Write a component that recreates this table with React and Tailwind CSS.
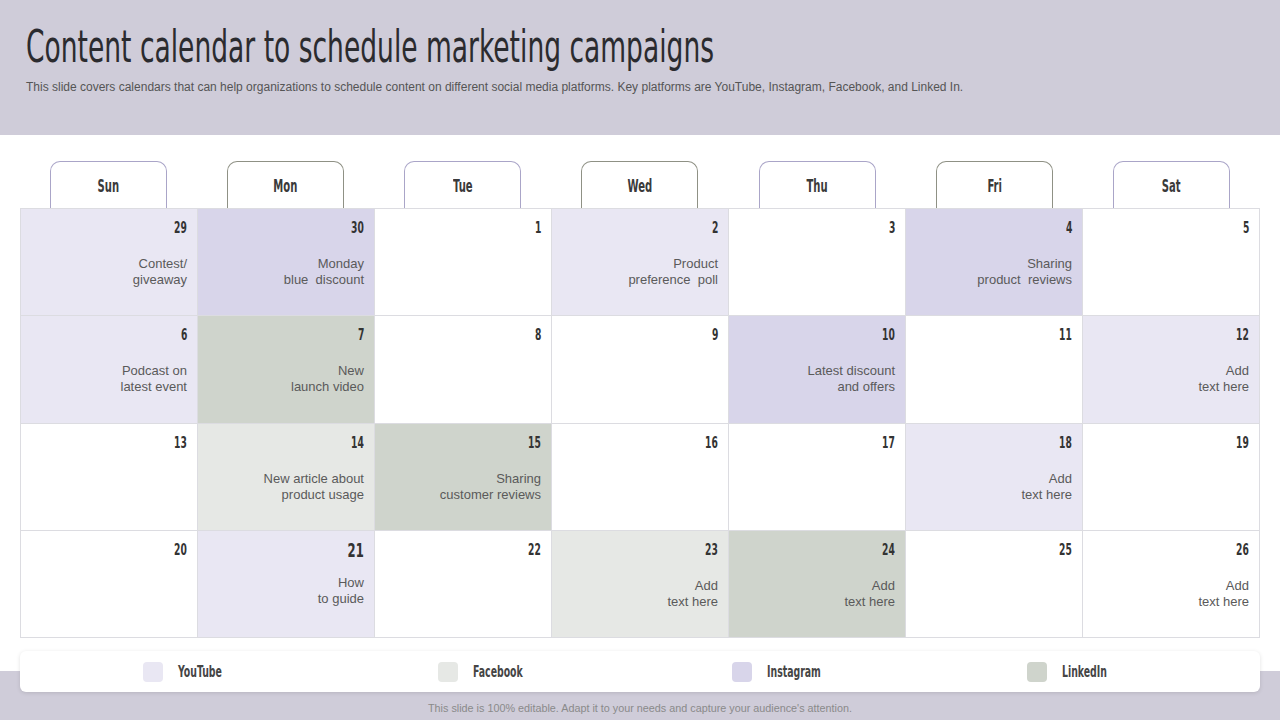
const narrow = "font-['Liberation_Sans_Narrow','DejaVu_Sans_Condensed','Arial_Narrow',sans-serif]";

const days = [
  { name: "Sun", tone: "border-[#aaa5c8]" },
  { name: "Mon", tone: "border-[#8f9185]" },
  { name: "Tue", tone: "border-[#aaa5c8]" },
  { name: "Wed", tone: "border-[#8f9185]" },
  { name: "Thu", tone: "border-[#aaa5c8]" },
  { name: "Fri", tone: "border-[#8f9185]" },
  { name: "Sat", tone: "border-[#aaa5c8]" },
];

const fills = {
  w: "bg-white",
  yt: "bg-[#e9e7f3]",
  ig: "bg-[#d8d5ea]",
  fb: "bg-[#e6e8e5]",
  li: "bg-[#cfd4cc]",
};

const weeks = [
  [
    { d: 29, c: "yt", t: ["Contest/", "giveaway"] },
    { d: 30, c: "ig", t: ["Monday", "blue  discount"] },
    { d: 1, c: "w" },
    { d: 2, c: "yt", t: ["Product", "preference  poll"] },
    { d: 3, c: "w" },
    { d: 4, c: "ig", t: ["Sharing", "product  reviews"] },
    { d: 5, c: "w" },
  ],
  [
    { d: 6, c: "yt", t: ["Podcast on", "latest event"] },
    { d: 7, c: "li", t: ["New", "launch video"] },
    { d: 8, c: "w" },
    { d: 9, c: "w" },
    { d: 10, c: "ig", t: ["Latest discount", "and offers"] },
    { d: 11, c: "w" },
    { d: 12, c: "yt", t: ["Add", "text here"] },
  ],
  [
    { d: 13, c: "w" },
    { d: 14, c: "fb", t: ["New article about", "product usage"] },
    { d: 15, c: "li", t: ["Sharing", "customer reviews"] },
    { d: 16, c: "w" },
    { d: 17, c: "w" },
    { d: 18, c: "yt", t: ["Add", "text here"] },
    { d: 19, c: "w" },
  ],
  [
    { d: 20, c: "w" },
    { d: 21, c: "yt", t: ["How", "to guide"], big: true },
    { d: 22, c: "w" },
    { d: 23, c: "fb", t: ["Add", "text here"] },
    { d: 24, c: "li", t: ["Add", "text here"] },
    { d: 25, c: "w" },
    { d: 26, c: "w", t: ["Add", "text here"] },
  ],
];

const legend = [
  { label: "YouTube", c: "yt" },
  { label: "Facebook", c: "fb" },
  { label: "Instagram", c: "ig" },
  { label: "LinkedIn", c: "li" },
];

function DayCell({ cell }) {
  return (
    <div className={`${fills[cell.c]} h-[106.25px] pr-[10px] text-right`}>
      <div className={`${narrow} h-[29px] pt-[9px] font-bold leading-[20px] text-[#333]`}>
        <span className={`inline-block origin-right scale-x-[0.68] ${cell.big ? "text-[19px]" : "text-[15px]"}`}>{cell.d}</span>
      </div>
      {cell.t ? (
        <div className={`${cell.big ? "mt-[15px]" : "mt-[18px]"} whitespace-pre font-['Liberation_Sans',Arial,sans-serif] text-[13px] leading-[16px] text-[#5a5a5a]`}>
          {cell.t.map((line) => (
            <div key={line}>{line}</div>
          ))}
        </div>
      ) : null}
    </div>
  );
}

export default function App() {
  return (
    <div className="h-[720px] w-[1280px] overflow-hidden bg-white">
      <header className="h-[135px] bg-[#cfccd9] pl-[26px] pt-[22px]">
        <h1 className={`${narrow} origin-left scale-x-[0.67] whitespace-nowrap text-[44px] font-normal leading-[50px] text-[#2b2b2f]`}>
          Content calendar to schedule marketing campaigns
        </h1>
        <p className="mt-[8px] whitespace-nowrap font-['Liberation_Sans',Arial,sans-serif] text-[12px] leading-[14px] text-[#555]">
          This slide covers calendars that can help organizations to schedule content on different social media platforms. Key platforms are YouTube, Instagram, Facebook, and Linked In.
        </p>
      </header>

      <main className="px-[20px] pt-[26px]">
        <div className="grid grid-cols-7">
          {days.map((day) => (
            <div key={day.name} className="flex justify-center">
              <div className={`flex h-[47px] w-[117px] items-center justify-center rounded-t-[10px] border border-b-0 ${day.tone} bg-white`}>
                <span className={`${narrow} inline-block scale-x-[0.62] text-[18px] font-bold text-[#3a3a3a]`}>{day.name}</span>
              </div>
            </div>
          ))}
        </div>
        <div className="grid grid-cols-7 gap-px bg-[#dcdce1] p-px">
          {weeks.flat().map((cell) => (
            <DayCell key={`${cell.d}-${cell.c}`} cell={cell} />
          ))}
        </div>
      </main>

      <footer className="mt-[13px] h-[82px] bg-[linear-gradient(to_bottom,#ffffff_0px,#ffffff_20px,#cfccd9_20px)] px-[20px]">
        <div className="flex h-[41px] items-center rounded-[6px] bg-white pl-[123px] shadow-[0_1px_4px_rgba(0,0,0,0.12)]">
          {legend.map((item) => (
            <div key={item.label} className="flex w-[294.5px] shrink-0 items-center">
              <span className={`h-[20px] w-[20px] shrink-0 rounded-[4px] ${fills[item.c]}`} />
              <span className={`${narrow} ml-[15px] inline-block origin-left scale-x-[0.65] text-[16px] font-bold text-[#454545]`}>{item.label}</span>
            </div>
          ))}
        </div>
        <p className="mt-[8px] text-center font-['Liberation_Sans',Arial,sans-serif] text-[10.8px] text-[#8a8a8a]">
          This slide is 100% editable.  Adapt it to your needs and capture your audience's attention.
        </p>
      </footer>
    </div>
  );
}
